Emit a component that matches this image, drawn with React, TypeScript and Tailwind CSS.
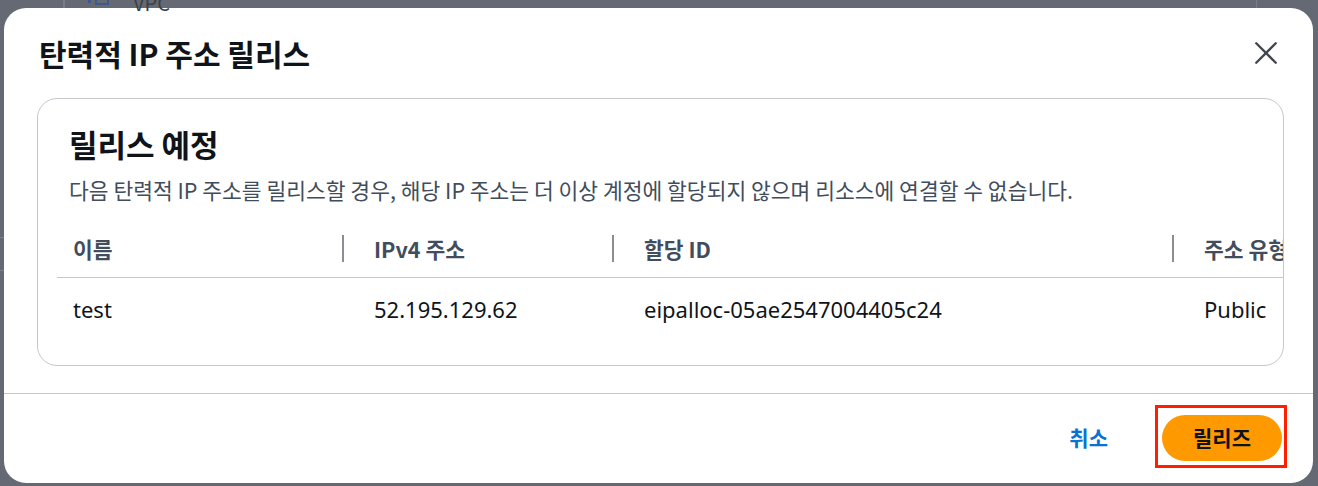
import React from "react";

const font = { fontFamily: '"Noto Sans CJK KR", "Noto Sans", sans-serif' };
const latin = { fontFamily: '"Noto Sans", "Noto Sans CJK KR", sans-serif' };

const columns = [
  { label: "이름", value: "test", width: "w-[285px]" },
  { label: "IPv4 주소", value: "52.195.129.62", width: "w-[270px]" },
  { label: "할당 ID", value: "eipalloc-05ae2547004405c24", width: "w-[560px]" },
  { label: "주소 유형", value: "Public", width: "w-[200px]" },
];

function CloseIcon() {
  return (
    <svg width="26" height="26" viewBox="0 0 24 24" fill="none" stroke="#424650" strokeWidth="2.2" strokeLinecap="round">
      <path d="M3 3 21 21" />
      <path d="M21 3 3 21" />
    </svg>
  );
}

export default function App() {
  return (
    <div className="relative w-[1318px] h-[486px] overflow-hidden bg-[#656973]" style={font}>
      {/* page behind the overlay */}
      <div className="absolute left-[63px] top-0 h-[8px] w-[2px] bg-[#787c85]" />
      <div className="absolute left-[95px] -top-[9px] h-[14px] w-[14px] border-2 border-[#3e5a8c]" />
      <div className="absolute left-[88px] top-0 h-[3px] w-[3px] bg-[#3e5a8c]" />
      <div className="absolute left-[133px] -top-[12px] text-[20px] text-[#3a3f48]">VPC</div>
      <div className="absolute left-[1256px] top-0 h-[8px] w-[1px] bg-[#7a7e87]" />
      <div className="absolute left-0 top-[237px] h-[1px] w-[4px] bg-[#7d818a]" />
      <div className="absolute left-0 top-[270px] h-[1px] w-[4px] bg-[#7d818a]" />

      <div className="pt-[8px] pl-[4px] pr-[5px]">
        <div className="h-[475px] bg-white rounded-[22px] flex flex-col overflow-hidden">
          {/* header */}
          <div className="flex items-start justify-between pl-[35px] pr-[34px] pt-[27px]">
            <h2 className="text-[30px] leading-[36px] font-bold text-[#0f141a]">탄력적 IP 주소 릴리스</h2>
            <button type="button" className="mt-[5px]">
              <CloseIcon />
            </button>
          </div>

          {/* body */}
          <div className="pl-[33px] pr-[29px] pt-[27px]">
            <div className="border border-[#c6c6cd] rounded-[20px] overflow-hidden pt-[27px] pb-[25px]">
              <div className="px-[31px]">
                <h3 className="text-[31px] leading-[36px] font-bold text-[#0f141a]">릴리스 예정</h3>
                <p className="mt-[14px] text-[21.5px] leading-[28px] text-[#414d5c] whitespace-nowrap">
                  다음 탄력적 IP 주소를 릴리스할 경우, 해당 IP 주소는 더 이상 계정에 할당되지 않으며 리소스에 연결할 수 없습니다.
                </p>
              </div>

              <div className="mt-[17px] pl-[19px]">
                <div className="flex border-b border-[#c6c6cd] h-[57px] w-max">
                  {columns.map((c, i) => (
                    <div key={c.label} className={`${c.width} shrink-0 flex items-center relative ${i === 0 ? "pl-[16px]" : "pl-[32px]"}`}>
                      {i > 0 && <div className="absolute left-0 top-[14px] h-[27px] w-[2px] bg-[#8c8c94]" />}
                      <span className="text-[21.5px] font-bold text-[#414d5c] whitespace-nowrap">{c.label}</span>
                    </div>
                  ))}
                </div>
                <div className="flex h-[62px] w-max">
                  {columns.map((c, i) => (
                    <div key={c.label} className={`${c.width} shrink-0 flex items-center ${i === 0 ? "pl-[16px]" : "pl-[32px]"}`}>
                      <span className="text-[22px] text-[#0f141a] whitespace-nowrap" style={latin}>
                        {c.value}
                      </span>
                    </div>
                  ))}
                </div>
              </div>
            </div>
          </div>

          {/* footer */}
          <div className="mt-[27px] border-t border-[#c6c6cd] flex-1 flex items-start justify-end pr-[31px] pt-[21px]">
            <button type="button" className="h-[46px] px-[20px] mr-[34px] text-[21px] font-bold text-[#0972d3]">
              취소
            </button>
            <div className="relative">
              <button type="button" className="h-[46px] w-[120px] rounded-full bg-[#ff9900] text-[21px] font-bold text-[#0f141a]">
                릴리즈
              </button>
              <div className="absolute -left-[7px] -right-[5px] -top-[10px] -bottom-[7px] border-[3px] border-[#ff1f00]" />
            </div>
          </div>
        </div>
      </div>
    </div>
  );
}
